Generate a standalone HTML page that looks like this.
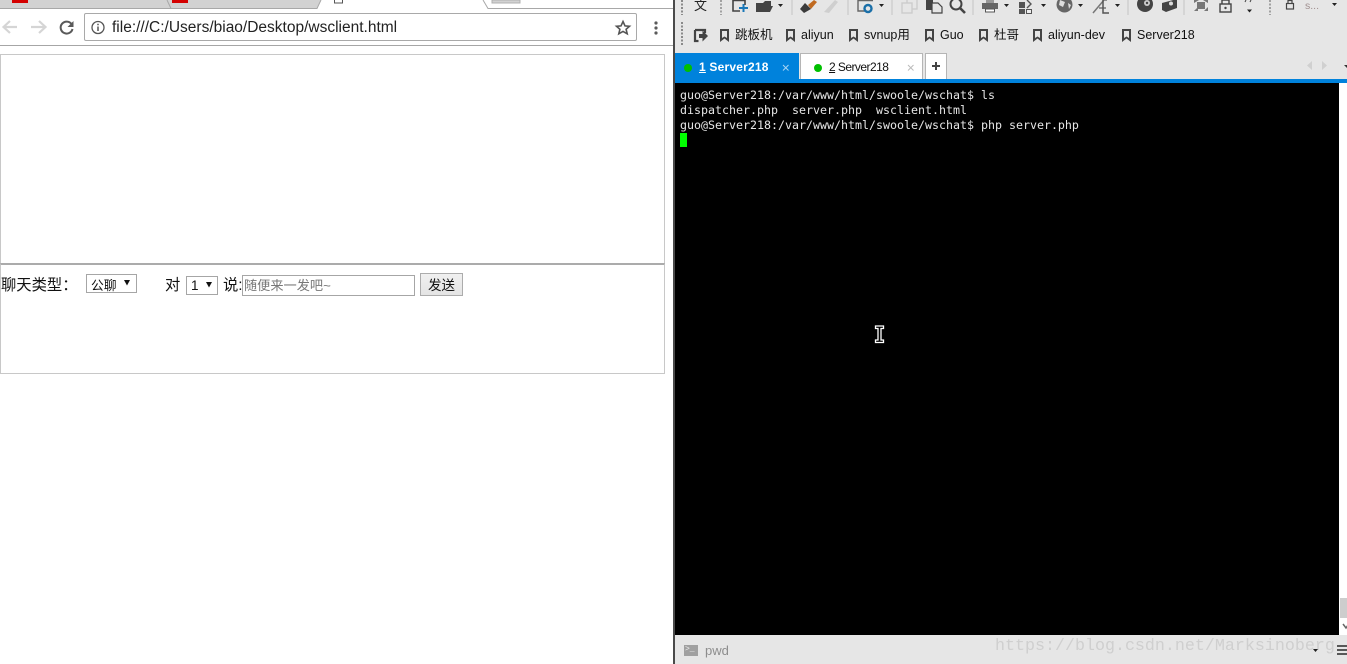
<!DOCTYPE html>
<html>
<head>
<meta charset="utf-8">
<style>
html,body{margin:0;padding:0;width:1347px;height:664px;overflow:hidden;background:#fff;font-family:"Liberation Sans","Noto Sans CJK SC",sans-serif}
.a{position:absolute;white-space:pre}
svg{position:absolute;overflow:visible}
.bm{font-size:12.5px;color:#111;top:28px;line-height:15px}
.mono{font-family:"DejaVu Sans Mono","Liberation Mono",monospace;font-size:11.64px;color:#e6e6e6;left:680px;line-height:15px}
.sel{border:1px solid #a6a6a6;background:#fff;box-sizing:border-box}
.lbl{font-size:15.3px;line-height:20px;color:#111}
</style>
</head>
<body>
<!-- Left: browser tab strip -->
<svg style="left:0;top:0" width="673" height="10">
<path d="M0 0H321L317 8.500H0Z" fill="#d2d2d2"/>
<path d="M167 0L171 8.500" stroke="#a8a8a8" fill="none"/>
<path d="M321 0L317 8.500H0" stroke="#a8a8a8" fill="none"/>
<rect x="12" y="0" width="16" height="3" fill="#d40000"/>
<rect x="172" y="0" width="16" height="3" fill="#d40000"/>
<rect x="334.500" y="-1" width="8" height="4" fill="#fff" stroke="#555"/>
<path d="M483 0L488 8.500H673" stroke="#a8a8a8" fill="none"/>
<path d="M492 0H520V3H492Z" fill="#d2d2d2" stroke="#b0b0b0"/>
</svg>
<svg style="left:0;top:15px" width="90" height="24">
<path d="M17 12H4M10 6L3.500 12L10 18" fill="none" stroke="#d5d5d5" stroke-width="2.200"/>
<path d="M31 12H45M39 6L45.500 12L39 18" fill="none" stroke="#d5d5d5" stroke-width="2.200"/>
<path d="M71.500 9A6 6 0 1 0 72.500 14" fill="none" stroke="#5a5a5a" stroke-width="2"/>
<path d="M73.500 6V12H67.500Z" fill="#5a5a5a"/>
</svg>
<div class="a" style="left:84px;top:13px;width:553px;height:28px;box-sizing:border-box;border:1px solid #a9a9a9;border-radius:2px;background:#fff"></div>
<svg style="left:90px;top:19px" width="16" height="16">
<circle cx="8" cy="8.500" r="6" fill="none" stroke="#555" stroke-width="1.300"/>
<path d="M8 7.500V12M8 4.800V6.300" stroke="#555" stroke-width="1.500"/>
</svg>
<div class="a" style="left:112px;top:19px;font-size:15.5px;line-height:18px;color:#222">file:///C:/Users/biao/Desktop/wsclient.html</div>
<svg style="left:614px;top:18px" width="18" height="18">
<path d="M9 3.500L11 7.900L15.500 8.300L12.100 11.300L13.200 15.800L9 13.400L4.800 15.800L5.900 11.300L2.500 8.300L7 7.900Z" fill="none" stroke="#555" stroke-width="1.600"/>
</svg>
<svg style="left:652px;top:20px" width="8" height="16">
<circle cx="4" cy="3" r="1.600" fill="#5a5a5a"/><circle cx="4" cy="8" r="1.600" fill="#5a5a5a"/><circle cx="4" cy="13" r="1.600" fill="#5a5a5a"/>
</svg>
<div class="a" style="left:0;top:45px;width:673px;height:1px;background:#a6a6a6"></div>

<!-- page boxes -->
<div class="a" style="left:0;top:54px;width:665px;height:210px;box-sizing:border-box;border:1px solid #c8c8c8;border-bottom:none"></div>
<div class="a" style="left:0;top:263px;width:665px;height:111px;box-sizing:border-box;border:1px solid #c8c8c8;border-top:2px solid #ababab"></div>
<div class="a lbl" style="left:1px;top:276px">聊天类型：</div>
<div class="a sel" style="left:86px;top:274px;width:51px;height:19px"></div>
<div class="a" style="left:91px;top:278px;font-size:12.800px;line-height:16px;color:#111">公聊</div>
<svg style="left:123.500px;top:279.500px" width="7" height="6"><path d="M0 0H6L3 5.500Z" fill="#111"/></svg>
<div class="a lbl" style="left:165px;top:276px">对</div>
<div class="a sel" style="left:186px;top:276px;width:32px;height:19px"></div>
<div class="a" style="left:191px;top:278px;font-size:13.500px;line-height:15px;color:#111">1</div>
<svg style="left:205.500px;top:282px" width="7" height="6"><path d="M0 0H6L3 5.500Z" fill="#111"/></svg>
<div class="a lbl" style="left:223px;top:276px">说:</div>
<div class="a" style="left:242px;top:275px;width:173px;height:21px;box-sizing:border-box;border:1px solid #a6a6a6;background:#fff"></div>
<div class="a" style="left:244px;top:277px;font-size:13.200px;line-height:17px;color:#777">随便来一发吧~</div>
<div class="a" style="left:420px;top:273px;width:43px;height:23px;box-sizing:border-box;border:1px solid #acacac;background:linear-gradient(#f0f0f0,#e4e4e4);text-align:center;font-size:13.500px;line-height:23px;color:#111">发送</div>

<!-- Divider -->
<div class="a" style="left:673px;top:0;width:2px;height:664px;background:#4a4a4a"></div>

<!-- Right: Xshell -->
<div class="a" style="left:675px;top:0;width:672px;height:79px;background:#e6e6e6"></div>
<div class="a" style="left:694px;top:-2px;font-size:13px;line-height:16px;color:#222">文</div>
<svg style="left:675px;top:0" width="672" height="53">
<path d="M7 0V15M7 22V45" stroke="#8a8a8a" stroke-width="2" stroke-dasharray="2 1.500" fill="none"/>
<path d="M46 0V15M595 0V15" stroke="#8a8a8a" stroke-width="1.500" stroke-dasharray="2 1.500" fill="none"/>
<path d="M117 0V15M173 0V15M217 0V15M298 0V15M453 0V15M509 0V15" stroke="#c4c4c4"/>
<path d="M58 0V11H65M58 0.500H70V5" fill="none" stroke="#444" stroke-width="1.600"/><path d="M64 8H73M68.500 4V12" stroke="#1a78b8" stroke-width="2"/>
<path d="M81 3H88L90 1H96V6H98L95 12H81Z" fill="#444"/><path d="M103 4H108L105.500 7Z" fill="#222"/>
<path d="M133 5L139 0L142 2L136 9Z" fill="#c06a20"/><path d="M125 9L130 3L136 9L129 13Z" fill="#3a3a3a"/>
<path d="M149 12L160 0L163 2L154 13Z" fill="#cfcfcf"/>
<path d="M183 0V11H190M183 0.500H198" fill="none" stroke="#666" stroke-width="1.400"/><circle cx="193" cy="8.500" r="3.500" fill="none" stroke="#1a6fa8" stroke-width="2.400"/><path d="M204 4H209L206.500 7Z" fill="#222"/>
<rect x="232" y="-1" width="10" height="10" fill="none" stroke="#ccc" stroke-width="1.400"/><rect x="227" y="3" width="10" height="10" fill="#e6e6e6" stroke="#ccc" stroke-width="1.400"/>
<rect x="251" y="0" width="7" height="10" fill="#444"/><path d="M257 3H263L267 7V13H257Z" fill="#e6e6e6" stroke="#444" stroke-width="1.200"/>
<circle cx="281" cy="4" r="5.500" fill="none" stroke="#444" stroke-width="2"/><path d="M285 8L290 13" stroke="#444" stroke-width="2.600"/>
<rect x="307" y="3" width="16" height="6" fill="#666"/><rect x="311" y="0" width="8" height="3" fill="#999"/><rect x="310.500" y="9" width="9" height="3" fill="#fff" stroke="#555"/><path d="M329 4H334L331.500 7Z" fill="#222"/>
<rect x="344" y="2" width="6" height="6" fill="#555"/><rect x="344" y="9" width="6" height="5" fill="#555"/><rect x="351.500" y="9.500" width="5" height="4" fill="#eee" stroke="#555"/><path d="M352 0L356 4L352 8" stroke="#555" fill="none" stroke-width="1.400"/><path d="M366 4H371L368.500 7Z" fill="#222"/>
<circle cx="389.500" cy="4.500" r="8" fill="#666"/><path d="M385 0L390 2L388 7L384 5Z M393 3L396 5L394 9Z" fill="#ddd"/><path d="M403 4H408L405.500 7Z" fill="#222"/>
<path d="M418 13L429 0H432M424 8H431" fill="none" stroke="#777" stroke-width="1.500"/><path d="M428 0V13H434" fill="none" stroke="#555" stroke-width="1.500"/><path d="M440 4H445L442.500 7Z" fill="#222"/>
<circle cx="470" cy="4" r="8" fill="#444"/><circle cx="472" cy="3" r="3" fill="#ccc"/><circle cx="472" cy="3" r="1.200" fill="#444"/>
<path d="M487 3L502 -1V8L491 12L487 10Z" fill="#444"/><circle cx="496" cy="3.500" r="2" fill="#ddd"/>
<path d="M519 0H524L519 3ZM533 0H528L533 3ZM519 11L523 7V11ZM533 11H529L533 7ZM522 2H530V9H522Z" fill="#777"/>
<rect x="545" y="4" width="11" height="8" fill="none" stroke="#444" stroke-width="1.400"/><path d="M547 4V0H554V4" fill="none" stroke="#444" stroke-width="1.400"/><circle cx="550.500" cy="8" r="1.200" fill="#444"/>
<path d="M572 9.500H577L574.500 12.500Z" fill="#222"/><path d="M571 0L570 2M576 0L575 2" stroke="#444"/>
<rect x="611.500" y="3.500" width="7" height="5.500" fill="none" stroke="#444" stroke-width="1.200"/><path d="M613 3.500V0.500H617V3.500" fill="none" stroke="#444" stroke-width="1.200"/>
<path d="M657 3H662L659.500 6Z" fill="#222"/>
<path d="M20 30V41H23.500M20 30H30V33" fill="none" stroke="#444" stroke-width="2.200"/><path d="M24 34H27.500V30.500L33 36L27.500 41.500V38H24Z" fill="#444"/>
</svg>
<svg style="left:675px;top:28px" width="500" height="16" fill="#444">
<path d="M45 1H54V14L49.500 10.500L45 14Z M47 3V10L49.500 8.500L52 10V3Z" fill-rule="evenodd"/>
<path d="M111 1H120V14L115.500 10.500L111 14Z M113 3V10L115.500 8.500L118 10V3Z" fill-rule="evenodd"/>
<path d="M174 1H183V14L178.500 10.500L174 14Z M176 3V10L178.500 8.500L181 10V3Z" fill-rule="evenodd"/>
<path d="M250 1H259V14L254.500 10.500L250 14Z M252 3V10L254.500 8.500L257 10V3Z" fill-rule="evenodd"/>
<path d="M304 1H313V14L308.500 10.500L304 14Z M306 3V10L308.500 8.500L311 10V3Z" fill-rule="evenodd"/>
<path d="M358 1H367V14L362.500 10.500L358 14Z M360 3V10L362.500 8.500L365 10V3Z" fill-rule="evenodd"/>
<path d="M447 1H456V14L451.500 10.500L447 14Z M449 3V10L451.500 8.500L454 10V3Z" fill-rule="evenodd"/>
</svg>
<div class="a bm" style="left:735px">跳板机</div>
<div class="a bm" style="left:801px">aliyun</div>
<div class="a bm" style="left:864px">svnup用</div>
<div class="a bm" style="left:940px">Guo</div>
<div class="a bm" style="left:994px">杜哥</div>
<div class="a bm" style="left:1048px">aliyun-dev</div>
<div class="a bm" style="left:1137px">Server218</div>
<div class="a" style="left:1305px;top:0;font-size:10.500px;line-height:12px;color:#a09090">s...</div>

<!-- Tabs -->
<div class="a" style="left:675px;top:53px;width:124px;height:26px;background:#0082dc"></div>
<div class="a" style="left:800px;top:53px;width:123px;height:26px;box-sizing:border-box;border:1px solid #b5b5b5;border-bottom:none;background:#fff"></div>
<div class="a" style="left:925px;top:53px;width:22px;height:26px;box-sizing:border-box;border:1px solid #b5b5b5;border-bottom:none;background:#fff"></div>
<div class="a" style="left:684px;top:64px;width:8px;height:8px;border-radius:50%;background:#00c000"></div>
<div class="a" style="left:814px;top:64px;width:8px;height:8px;border-radius:50%;background:#00c000"></div>
<div class="a" style="left:699px;top:60px;font-size:12px;line-height:15px;font-weight:bold;letter-spacing:.2px;color:#fff"><u>1</u> Server218</div>
<div class="a" style="left:829px;top:60px;font-size:12px;line-height:15px;letter-spacing:-.55px;color:#111"><u>2</u> Server218</div>
<svg style="left:782px;top:64px" width="8" height="8"><path d="M1 1L6.500 6.500M6.500 1L1 6.500" stroke="#a8d4f4"/></svg>
<svg style="left:907px;top:64px" width="8" height="8"><path d="M1 1L6.500 6.500M6.500 1L1 6.500" stroke="#bbb"/></svg>
<svg style="left:931px;top:61px" width="10" height="10"><path d="M1 5H9M5 1V9" stroke="#444" stroke-width="2"/></svg>
<svg style="left:1306px;top:60px" width="41" height="12">
<path d="M6 1V10L1 5.500Z M16 1V10L21 5.500Z" fill="#d0d0d0"/><path d="M38 5H41V8Z" fill="#333"/>
</svg>
<div class="a" style="left:675px;top:79px;width:672px;height:4px;background:#0082dc"></div>

<!-- Terminal -->
<div class="a" style="left:675px;top:83px;width:664px;height:552px;background:#000"></div>
<div class="a mono" style="top:88px">guo@Server218:/var/www/html/swoole/wschat$ ls</div>
<div class="a mono" style="top:103px">dispatcher.php  server.php  wsclient.html</div>
<div class="a mono" style="top:118px">guo@Server218:/var/www/html/swoole/wschat$ php server.php</div>
<div class="a" style="left:680px;top:133px;width:7px;height:14px;background:#00ff00"></div>
<svg style="left:874px;top:325px" width="11" height="19">
<path d="M1.500 1H9.500V3.500H7V15H9.500V17.500H1.500V15H4V3.500H1.500Z" fill="#000" stroke="#fff" stroke-width="1.300"/>
</svg>

<!-- Scrollbar -->
<div class="a" style="left:1339px;top:83px;width:8px;height:552px;background:#fff"></div>
<div class="a" style="left:1340px;top:598px;width:7px;height:20px;background:#cdcdcd"></div>
<svg style="left:1343px;top:624px" width="4" height="5"><path d="M0 0L3 4L5 1" stroke="#666" fill="none" stroke-width="1.500"/></svg>

<!-- Bottom bar -->
<div class="a" style="left:675px;top:635px;width:672px;height:29px;background:#e6e6e6"></div>
<div class="a" style="left:684px;top:645px;width:14px;height:11px;background:#a0a0a0"></div>
<div class="a" style="left:685px;top:645px;font-family:'Liberation Mono',monospace;font-size:8px;line-height:10px;color:#eee">&gt;_</div>
<div class="a" style="left:705px;top:643px;font-size:13px;line-height:16px;color:#8d8d8d">pwd</div>
<div class="a" style="left:995px;top:636px;font-family:'Liberation Mono',monospace;font-size:16.670px;line-height:22px;color:#cfcfcf">https://blog.csdn.net/Marksinoberg</div>
<svg style="left:1313px;top:649px" width="34" height="7">
<path d="M0 0H5L2.500 3Z" fill="#222"/>
</svg>
<svg style="left:1337px;top:645px" width="10" height="11">
<path d="M0 1H10M0 5H10M0 9H10" stroke="#444" stroke-width="1.800"/>
</svg>
</body>
</html>
